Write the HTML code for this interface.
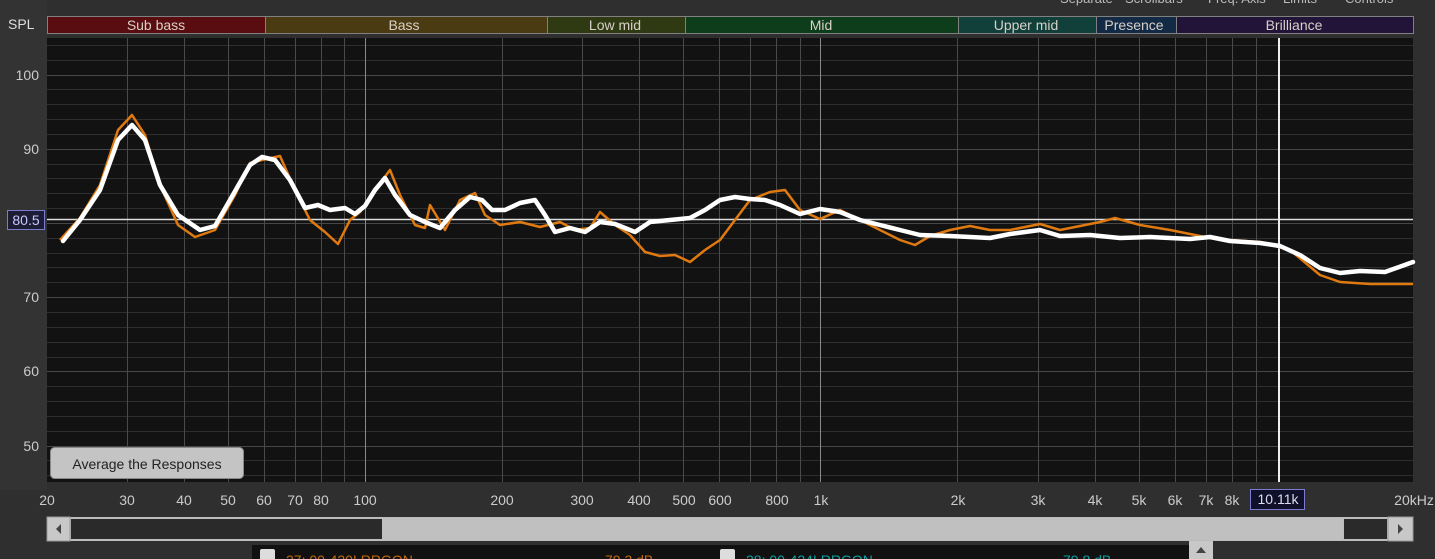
<!DOCTYPE html>
<html><head><meta charset="utf-8"><style>
html,body{margin:0;padding:0;background:#2e2e2e;width:1435px;height:559px;overflow:hidden}
svg{display:block;font-family:"Liberation Sans",sans-serif}
</style></head><body>
<svg width="1435" height="559" viewBox="0 0 1435 559" xmlns="http://www.w3.org/2000/svg">
<rect x="0" y="0" width="1435" height="559" fill="#2f2f2f"/>
<rect x="0" y="0" width="47" height="490" fill="#333"/>
<g font-size="13" fill="#bbb">
<text x="1060" y="3">Separate</text><text x="1125" y="3">Scrollbars</text><text x="1208" y="3">Freq. Axis</text><text x="1283" y="3">Limits</text><text x="1345" y="3">Controls</text>
</g>
<g stroke="#808080" stroke-width="1">
<rect x="47.5" y="16.5" width="218" height="17" fill="#5a0d10"/>
<rect x="265.5" y="16.5" width="282" height="17" fill="#4a3b12"/>
<rect x="547.5" y="16.5" width="138" height="17" fill="#2f3a12"/>
<rect x="685.5" y="16.5" width="273" height="17" fill="#0e3d1c"/>
<rect x="958.5" y="16.5" width="138" height="17" fill="#113f3a"/>
<rect x="1096.5" y="16.5" width="80" height="17" fill="#122a46"/>
<rect x="1176.5" y="16.5" width="237" height="17" fill="#221338"/>
</g>
<g font-size="14" text-anchor="middle" fill="#d8d0c8">
<text x="156" y="30">Sub bass</text><text x="404" y="30">Bass</text><text x="615" y="30">Low mid</text>
<text x="821" y="30">Mid</text><text x="1026" y="30">Upper mid</text><text x="1134" y="30">Presence</text><text x="1294" y="30">Brilliance</text>
</g>
<text x="8" y="29" font-size="14" fill="#ddd">SPL</text>
<rect x="47" y="38" width="1366" height="444" fill="#121212"/>
<g stroke="#2e2e2e" stroke-width="1">
<line x1="47" x2="1413" y1="45.5" y2="45.5"/><line x1="47" x2="1413" y1="60.5" y2="60.5"/>
<line x1="47" x2="1413" y1="89.5" y2="89.5"/><line x1="47" x2="1413" y1="104.5" y2="104.5"/><line x1="47" x2="1413" y1="119.5" y2="119.5"/><line x1="47" x2="1413" y1="134.5" y2="134.5"/>
<line x1="47" x2="1413" y1="164.5" y2="164.5"/><line x1="47" x2="1413" y1="178.5" y2="178.5"/><line x1="47" x2="1413" y1="193.5" y2="193.5"/><line x1="47" x2="1413" y1="208.5" y2="208.5"/>
<line x1="47" x2="1413" y1="238.5" y2="238.5"/><line x1="47" x2="1413" y1="253.5" y2="253.5"/><line x1="47" x2="1413" y1="267.5" y2="267.5"/><line x1="47" x2="1413" y1="282.5" y2="282.5"/>
<line x1="47" x2="1413" y1="312.5" y2="312.5"/><line x1="47" x2="1413" y1="327.5" y2="327.5"/><line x1="47" x2="1413" y1="342.5" y2="342.5"/><line x1="47" x2="1413" y1="357.5" y2="357.5"/>
<line x1="47" x2="1413" y1="386.5" y2="386.5"/><line x1="47" x2="1413" y1="401.5" y2="401.5"/><line x1="47" x2="1413" y1="416.5" y2="416.5"/><line x1="47" x2="1413" y1="431.5" y2="431.5"/>
<line x1="47" x2="1413" y1="460.5" y2="460.5"/><line x1="47" x2="1413" y1="475.5" y2="475.5"/>
</g>
<g stroke="#474747" stroke-width="1">
<line x1="47" x2="1413" y1="75.5" y2="75.5"/><line x1="47" x2="1413" y1="149.5" y2="149.5"/><line x1="47" x2="1413" y1="223.5" y2="223.5"/>
<line x1="47" x2="1413" y1="297.5" y2="297.5"/><line x1="47" x2="1413" y1="371.5" y2="371.5"/><line x1="47" x2="1413" y1="446.5" y2="446.5"/>
</g>
<g stroke="#4a4a4a" stroke-width="1">
<line x1="127.5" x2="127.5" y1="38" y2="482"/><line x1="184.5" x2="184.5" y1="38" y2="482"/><line x1="228.5" x2="228.5" y1="38" y2="482"/><line x1="264.5" x2="264.5" y1="38" y2="482"/><line x1="295.5" x2="295.5" y1="38" y2="482"/><line x1="321.5" x2="321.5" y1="38" y2="482"/><line x1="344.5" x2="344.5" y1="38" y2="482"/>
<line x1="502.5" x2="502.5" y1="38" y2="482"/><line x1="582.5" x2="582.5" y1="38" y2="482"/><line x1="639.5" x2="639.5" y1="38" y2="482"/><line x1="683.5" x2="683.5" y1="38" y2="482"/><line x1="719.5" x2="719.5" y1="38" y2="482"/><line x1="750.5" x2="750.5" y1="38" y2="482"/><line x1="776.5" x2="776.5" y1="38" y2="482"/><line x1="800.5" x2="800.5" y1="38" y2="482"/>
<line x1="957.5" x2="957.5" y1="38" y2="482"/><line x1="1038.5" x2="1038.5" y1="38" y2="482"/><line x1="1095.5" x2="1095.5" y1="38" y2="482"/><line x1="1139.5" x2="1139.5" y1="38" y2="482"/><line x1="1175.5" x2="1175.5" y1="38" y2="482"/><line x1="1206.5" x2="1206.5" y1="38" y2="482"/><line x1="1232.5" x2="1232.5" y1="38" y2="482"/><line x1="1256.5" x2="1256.5" y1="38" y2="482"/>
</g>
<g stroke="#8a8a8a" stroke-width="1"><line x1="365.5" x2="365.5" y1="38" y2="482"/><line x1="820.5" x2="820.5" y1="38" y2="482"/></g>
<line x1="47" x2="1413" y1="219.5" y2="219.5" stroke="#ddd" stroke-width="1.5"/>
<line x1="1279" x2="1279" y1="38" y2="482" stroke="#eee" stroke-width="2"/>
<polyline fill="none" stroke="#e07a10" stroke-width="2.5" stroke-linejoin="round" points="60,240 80,218 100,185 118,130 132,115 145,135 160,185 178,225 195,237 215,230 235,195 250,163 262,160 280,156 295,190 310,220 325,232 338,244 350,220 360,212 375,190 390,170 400,195 415,225 425,228 430,205 445,230 460,200 475,193 485,215 500,225 520,222 540,227 560,222 575,230 590,228 600,212 615,225 630,235 645,252 660,256 675,255 690,262 705,250 720,240 735,220 750,200 770,192 785,190 800,210 820,219 840,210 860,220 880,230 900,240 915,245 930,236 950,230 970,226 990,230 1010,230 1040,224 1060,230 1080,226 1100,222 1115,218 1140,225 1170,230 1190,234 1210,238 1230,240 1260,242 1290,250 1320,275 1340,282 1370,284 1413,284"/>
<polyline fill="none" stroke="#fff" stroke-width="4.5" stroke-linejoin="round" stroke-linecap="round" points="63,241 80,220 100,190 118,140 132,125 145,140 160,185 178,215 200,230 215,226 230,200 250,165 262,157 275,160 290,180 305,208 318,205 330,210 345,208 355,214 365,206 375,190 385,178 395,195 410,215 425,222 440,228 455,210 470,197 482,200 492,210 505,210 520,203 535,200 545,215 555,232 570,228 585,232 600,222 615,224 635,232 650,222 670,220 690,218 705,210 720,200 735,197 750,199 765,200 780,205 800,214 820,209 840,212 860,220 880,225 900,230 920,235 950,236 970,237 990,238 1010,234 1040,230 1060,236 1090,235 1120,238 1150,237 1170,238 1190,239 1210,237 1230,241 1260,243 1280,246 1300,255 1320,268 1340,273 1360,271 1385,272 1413,262"/>
<g font-size="14" fill="#ccc" text-anchor="end">
<text x="39" y="80">100</text><text x="39" y="154">90</text><text x="39" y="302">70</text><text x="39" y="376">60</text><text x="39" y="451">50</text>
</g>
<rect x="7.5" y="210.5" width="37" height="19" fill="#1c1c34" stroke="#7b7bd0"/>
<text x="26" y="225" font-size="14" fill="#c8c8ff" text-anchor="middle">80.5</text>
<rect x="50.5" y="447.5" width="193" height="31" rx="4" fill="#c4c4c4" stroke="#888"/>
<text x="147" y="469" font-size="14" fill="#222" text-anchor="middle">Average the Responses</text>
<g font-size="14" fill="#ccc" text-anchor="middle">
<text x="47" y="505">20</text><text x="127" y="505">30</text><text x="184" y="505">40</text><text x="228" y="505">50</text><text x="264" y="505">60</text><text x="295" y="505">70</text><text x="321" y="505">80</text><text x="365" y="505">100</text>
<text x="502" y="505">200</text><text x="582" y="505">300</text><text x="639" y="505">400</text><text x="684" y="505">500</text><text x="720" y="505">600</text><text x="777" y="505">800</text><text x="821" y="505">1k</text>
<text x="958" y="505">2k</text><text x="1038" y="505">3k</text><text x="1095" y="505">4k</text><text x="1139" y="505">5k</text><text x="1175" y="505">6k</text><text x="1206" y="505">7k</text><text x="1232" y="505">8k</text><text x="1414" y="505">20kHz</text>
</g>
<rect x="1250.5" y="489.5" width="54" height="20" fill="#10102a" stroke="#7b7bd0"/>
<text x="1278" y="504" font-size="14" fill="#dde" text-anchor="middle">10.11k</text>
<rect x="47" y="517" width="1366" height="24" fill="#bcbcbc"/>
<rect x="47" y="517" width="23" height="24" fill="#c8c8c8" stroke="#999"/>
<polygon points="61,524 56,529 61,534" fill="#444"/>
<rect x="71" y="519" width="311" height="20" fill="#2a2a2a"/>
<rect x="382" y="518" width="961" height="22" fill="#c0c0c0"/>
<rect x="1344" y="519" width="43" height="20" fill="#2a2a2a"/>
<rect x="1388" y="517" width="25" height="24" fill="#c8c8c8" stroke="#999"/>
<polygon points="1398,524 1403,529 1398,534" fill="#444"/>
<rect x="252" y="545" width="937" height="14" fill="#111"/>
<rect x="260" y="549" width="15" height="12" rx="2" fill="#ddd"/>
<rect x="720" y="549" width="15" height="12" rx="2" fill="#ddd"/>
<text x="286" y="565" font-size="14" fill="#c06a10">27: 00-420LRRGON</text>
<text x="605" y="565" font-size="14" fill="#c06a10">79.3 dB</text>
<text x="746" y="565" font-size="14" fill="#10a0a0">28: 00-424LRRGON</text>
<text x="1063" y="565" font-size="14" fill="#10a0a0">79.8 dB</text>
<rect x="1189" y="541" width="24" height="18" fill="#c8c8c8"/>
<polygon points="1196,553 1201,547 1206,553" fill="#444"/>
</svg>
</body></html>
